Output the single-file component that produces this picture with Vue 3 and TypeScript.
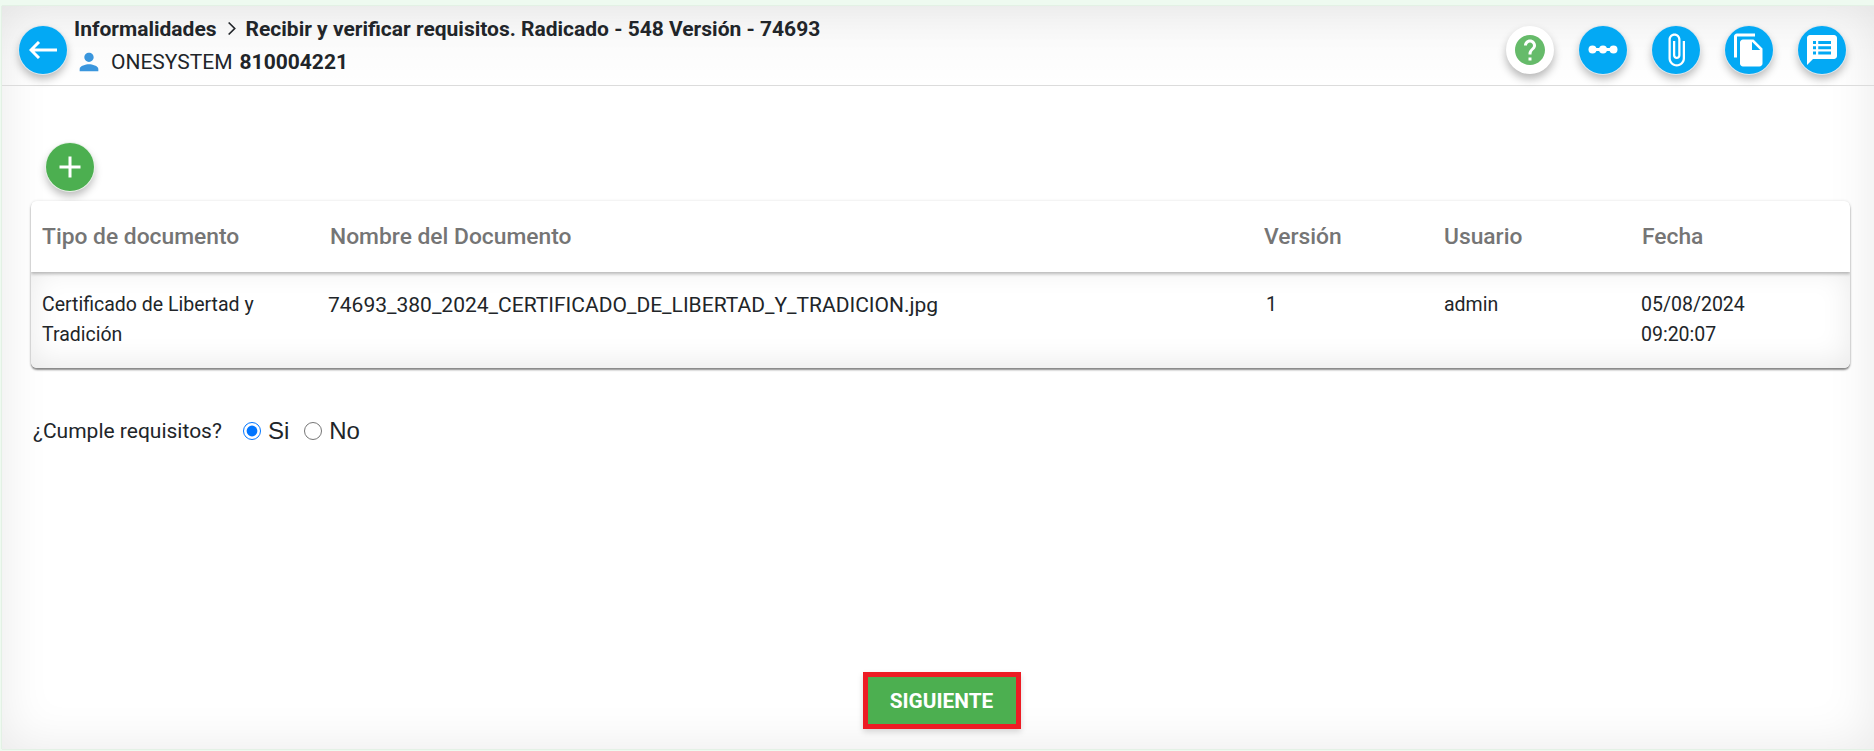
<script setup lang="ts">
interface DocRow {
  tipo: string;
  nombre: string;
  version: string;
  usuario: string;
  fecha: string[];
}

const columns = ['Tipo de documento', 'Nombre del Documento', 'Versión', 'Usuario', 'Fecha'];

const rows: DocRow[] = [
  {
    tipo: 'Certificado de Libertad y Tradición',
    nombre: '74693_380_2024_CERTIFICADO_DE_LIBERTAD_Y_TRADICION.jpg',
    version: '1',
    usuario: 'admin',
    fecha: ['05/08/2024', '09:20:07'],
  },
];
</script>

<template>
  <div class="page">
    <div class="card">
      <header class="topbar">
        <div class="topbar-left">
          <button class="fab fab-blue">
            <svg class="back-icon" viewBox="0 0 28 18">
              <path d="M10 1 2 9l8 8M2 9h26" fill="none" stroke="#fff" stroke-width="3" />
            </svg>
          </button>
          <div class="heading">
            <div class="crumbs">
              <span>Informalidades</span>
              <svg class="chevron" viewBox="0 0 24 24">
                <path d="M8 3.5 16.5 12 8 20.5" fill="none" stroke="#212529" stroke-width="2.4" />
              </svg>
              <span>Recibir y verificar requisitos. Radicado - 548 Versión - 74693</span>
            </div>
            <div class="owner">
              <svg class="person" viewBox="0 0 24 24">
                <path fill="#3a96dd" d="M12 12c2.21 0 4-1.79 4-4s-1.79-4-4-4-4 1.79-4 4 1.79 4 4 4zm0 2c-2.67 0-8 1.34-8 4v2h16v-2c0-2.66-5.33-4-8-4z" />
              </svg>
              <span>ONESYSTEM</span>
              <strong>810004221</strong>
            </div>
          </div>
        </div>
        <div class="actions">
          <button class="fab fab-white">
            <svg class="icon" viewBox="0 0 24 24">
              <path fill="#66bb6a" d="M12 2C6.48 2 2 6.48 2 12s4.48 10 10 10 10-4.48 10-10S17.52 2 12 2zm1 17h-2v-2h2v2zm2.07-7.75l-.9.92C13.45 12.9 13 13.5 13 15h-2v-.5c0-1.1.45-2.1 1.17-2.83l1.24-1.26c.37-.36.59-.86.59-1.41 0-1.1-.9-2-2-2s-2 .9-2 2H8c0-2.21 1.79-4 4-4s4 1.79 4 4c0 .88-.36 1.68-.93 2.25z" />
            </svg>
          </button>
          <button class="fab fab-blue">
            <svg class="icon-wide" viewBox="0 0 30 9">
              <path stroke="#fff" stroke-width="3" d="M4 4.5h22" />
              <circle cx="4.5" cy="4.5" r="4" fill="#fff" />
              <circle cx="15" cy="4.5" r="4" fill="#fff" />
              <circle cx="25.5" cy="4.5" r="4" fill="#fff" />
            </svg>
          </button>
          <button class="fab fab-blue">
            <svg class="icon" viewBox="0 0 24 24">
              <path fill="#fff" d="M16.5 6v11.5c0 2.21-1.79 4-4 4s-4-1.79-4-4V5c0-1.38 1.12-2.5 2.5-2.5s2.5 1.12 2.5 2.5v10.5c0 .55-.45 1-1 1s-1-.45-1-1V6H10v9.5c0 1.38 1.12 2.5 2.5 2.5s2.5-1.12 2.5-2.5V5c0-2.21-1.79-4-4-4S7 2.79 7 5v12.5c0 3.04 2.46 5.5 5.5 5.5s5.5-2.46 5.5-5.5V6h-1.5z" />
            </svg>
          </button>
          <button class="fab fab-blue">
            <svg class="icon" viewBox="0 0 24 24">
              <path fill="#fff" d="M16 1H4c-1.1 0-2 .9-2 2v14h2V3h12V1zm-1 4l6 6v10c0 1.1-.9 2-2 2H7.99C6.89 23 6 22.1 6 21l.01-14c0-1.1.89-2 1.99-2h7zm-1 7h5.5L14 6.5V12z" />
            </svg>
          </button>
          <button class="fab fab-blue">
            <svg class="icon" viewBox="0 0 24 24">
              <path fill="#fff" fill-rule="evenodd" d="M20 2H4c-1.1 0-2 .9-2 2v18l4-4h14c1.1 0 2-.9 2-2V4c0-1.1-.9-2-2-2zM6 6h2v2H6zM6 9.5h2v2H6zM6 13h2v2H6zM9.5 6H18v2H9.5zM9.5 9.5H18v2H9.5zM9.5 13H18v2H9.5z" />
            </svg>
          </button>
        </div>
      </header>

      <main class="content">
        <button class="fab fab-green">
          <svg class="add-icon" viewBox="0 0 24 24">
            <path fill="#fff" d="M19 13h-6v6h-2v-6H5v-2h6V5h2v6h6v2z" />
          </svg>
        </button>

        <section class="table">
          <div class="row row-head">
            <div v-for="col in columns" :key="col" class="cell">{{ col }}</div>
          </div>
          <div v-for="row in rows" :key="row.nombre" class="row row-body">
            <div class="cell cell-tipo">{{ row.tipo }}</div>
            <div class="cell cell-nombre">{{ row.nombre }}</div>
            <div class="cell cell-version">{{ row.version }}</div>
            <div class="cell">{{ row.usuario }}</div>
            <div class="cell cell-fecha">
              <div v-for="part in row.fecha" :key="part">{{ part }}</div>
            </div>
          </div>
        </section>

        <div class="question">
          <span class="question-label">¿Cumple requisitos?</span>
          <label class="option"><input type="radio" name="cumple" checked /> Si</label>
          <label class="option"><input type="radio" name="cumple" /> No</label>
        </div>

        <div class="footer">
          <button class="next">SIGUIENTE</button>
        </div>
      </main>
    </div>
  </div>
</template>

<style>
html,
body {
  margin: 0;
  background: #fff;
}
</style>

<style scoped>
.page {
  height: 751px;
  box-sizing: border-box;
  padding: 6px 0 2px 2px;
  background: #eefaf0;
  font-family: Roboto, "Liberation Sans", sans-serif;
  color: #212529;
  overflow: hidden;
}

.card {
  height: 100%;
  display: flex;
  flex-direction: column;
  background: #fff;
  box-shadow: inset 0 0 50px rgba(0, 0, 0, 0.09), 0 0 1px #a9c4b4;
}

.topbar {
  height: 80px;
  flex: none;
  box-sizing: border-box;
  display: flex;
  justify-content: space-between;
  align-items: center;
  padding: 8px 28px 0 17px;
  border-bottom: 1px solid #dcdcdc;
  background: linear-gradient(to bottom, rgba(0, 0, 0, 0.03), rgba(0, 0, 0, 0));
}

.topbar-left {
  display: flex;
  align-items: center;
  gap: 7px;
}

.heading {
  display: flex;
  flex-direction: column;
  gap: 7px;
  margin-top: -7px;
}

.crumbs {
  display: flex;
  align-items: center;
  gap: 6px;
  font-size: 21px;
  font-weight: 700;
  line-height: 24px;
}

.chevron {
  width: 17px;
  height: 17px;
}

.owner {
  display: flex;
  align-items: center;
  font-size: 21px;
  line-height: 24px;
}

.owner strong {
  margin-left: 7px;
}

.person {
  width: 28px;
  height: 28px;
  margin: 0 8px 0 1px;
}

.fab {
  width: 48px;
  height: 48px;
  flex: none;
  display: flex;
  align-items: center;
  justify-content: center;
  padding: 0;
  border: 0;
  border-radius: 50%;
  box-shadow: 0 5px 9px rgba(0, 0, 0, 0.28);
}

.fab-blue {
  background: #03a9f4;
  box-shadow: 0 0 0 1px #dfe8ee, 0 5px 9px rgba(0, 0, 0, 0.28);
}

.fab-white {
  background: #fff;
}

.fab-green {
  background: #4caf50;
  box-shadow: 0 0 0 1px #e8f2e8, 0 5px 9px rgba(0, 0, 0, 0.28);
  margin-left: 15px;
}

.actions {
  display: flex;
  gap: 25px;
}

.back-icon {
  width: 28px;
  height: 18px;
}

.icon {
  width: 36px;
  height: 36px;
}

.icon-wide {
  width: 30px;
  height: 9px;
}

.add-icon {
  width: 36px;
  height: 36px;
}

.content {
  flex: 1;
  display: flex;
  flex-direction: column;
  padding: 57px 24px 0 29px;
}

.table {
  margin-top: 10px;
  border-radius: 6px;
  box-shadow: 0 2px 2px rgba(0, 0, 0, 0.45), 0 0 3px rgba(0, 0, 0, 0.12);
  overflow: hidden;
}

.row {
  display: grid;
  grid-template-columns: 288px 934px 180px 198px 1fr;
}

.row-head {
  height: 71px;
  align-items: center;
  background: #fff;
  color: #757575;
  font-size: 22.8px;
  font-weight: 500;
  box-shadow: 0 2px 3px rgba(0, 0, 0, 0.25);
  position: relative;
}

.row-body {
  height: 96px;
  box-sizing: border-box;
  padding-top: 18px;
  font-size: 19.5px;
  line-height: 30px;
  background: #fff;
  box-shadow: inset 0 -4px 30px rgba(0, 0, 0, 0.09);
}

.cell {
  padding-left: 11px;
}

.cell-tipo {
  padding-right: 30px;
}

.cell-nombre {
  padding-left: 9px;
  font-size: 21px;
}

.cell-version {
  padding-left: 13px;
}

.cell-fecha {
  padding-left: 10px;
}

.question {
  display: flex;
  align-items: center;
  margin-top: 49px;
  padding-left: 2px;
  font-size: 21px;
}

.question-label {
  margin-right: 21px;
}

.option {
  display: flex;
  align-items: center;
  margin-right: 15px;
  font-family: "Liberation Sans", Arial, sans-serif;
  font-size: 24px;
  gap: 7px;
}

.option input {
  width: 18px;
  height: 18px;
  margin: 0;
}

.footer {
  margin-top: auto;
  display: flex;
  justify-content: center;
  padding: 0 0 20px 2px;
}

.next {
  width: 158px;
  height: 57px;
  box-sizing: border-box;
  background: #4caf50;
  border: 5px solid #ed1c24;
  color: #fff;
  font-family: inherit;
  font-size: 20.8px;
  font-weight: 700;
  box-shadow: 0 3px 6px rgba(0, 0, 0, 0.15);
}
</style>
